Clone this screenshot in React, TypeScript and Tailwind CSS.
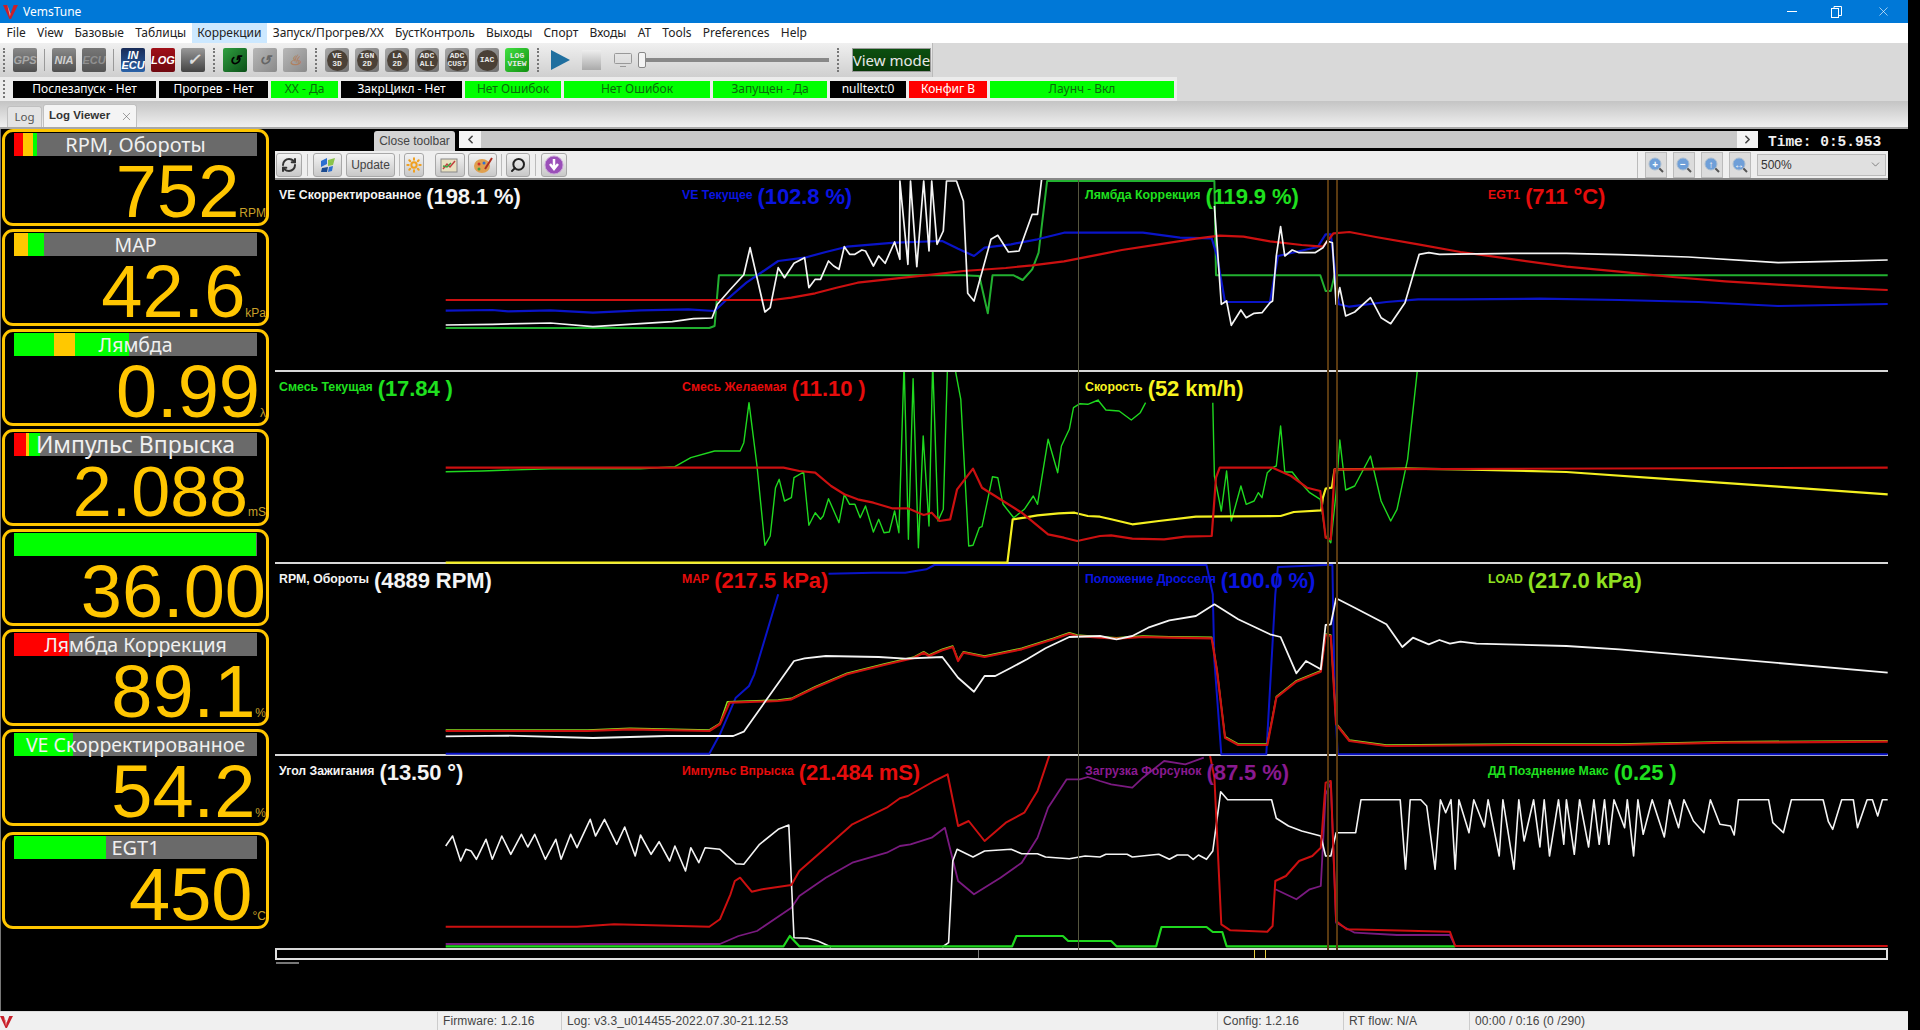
import { ReactNode } from 'react';
import { ChevronDown, ChevronLeft, ChevronRight, RefreshCw, Search, Sun, X } from 'lucide-react';

const menuItems = [
    'File', 'View', 'Базовые', 'Таблицы', 'Коррекции', 'Запуск/Прогрев/ХХ', 'БустКонтроль',
    'Выходы', 'Спорт', 'Входы', 'AT', 'Tools', 'Preferences', 'Help',
];

const indicators = [
    { text: 'Послезапуск - Нет', w: 'w-[143px]', cls: 'bg-black text-white' },
    { text: 'Прогрев - Нет', w: 'w-[109px]', cls: 'bg-black text-white' },
    { text: 'ХХ - Да', w: 'w-[67px]', cls: 'bg-[#00ff00] text-[#0a6a0a]' },
    { text: 'ЗакрЦикл - Нет', w: 'w-[121px]', cls: 'bg-black text-white' },
    { text: 'Нет Ошибок', w: 'w-[96px]', cls: 'bg-[#00ff00] text-[#0a6a0a]' },
    { text: 'Нет Ошибок', w: 'w-[146px]', cls: 'bg-[#00ff00] text-[#0a6a0a]' },
    { text: 'Запущен - Да', w: 'w-[114px]', cls: 'bg-[#00ff00] text-[#0a6a0a]' },
    { text: 'nulltext:0', w: 'w-[76px]', cls: 'bg-black text-white' },
    { text: 'Конфиг В', w: 'w-[78px]', cls: 'bg-[#ff0000] text-white' },
    { text: 'Лаунч - Вкл', w: 'w-[184px]', cls: 'bg-[#00ff00] text-[#0a6a0a]' },
];

const R = 'bg-[#ff0000]';
const O = 'bg-[#ffc800]';
const G = 'bg-[#00ff00]';

const gauges = [
    { title: 'RPM, Обороты', size: 'text-[20px]', num: 'text-[74px]', value: '752', unit: 'RPM', fill: [[R, 'w-[9px]'], [O, 'w-[10px]'], [G, 'w-[4px]']] },
    { title: 'MAP', size: 'text-[19.5px]', num: 'text-[74px]', value: '42.6', unit: 'kPa', fill: [[O, 'w-[14px]'], [G, 'w-[16px]']] },
    { title: 'Лямбда', size: 'text-[19.5px]', num: 'text-[74px]', value: '0.99', unit: 'λ', fill: [[G, 'w-[40px]'], [O, 'w-[21px]'], [G, 'w-[54px]']] },
    { title: 'Импульс Впрыска', size: 'text-[23px]', num: 'text-[70px]', value: '2.088', unit: 'mS', fill: [[R, 'w-[12px]'], [O, 'w-[3px]'], [G, 'w-[11px]']] },
    { title: '', size: 'text-[19.5px]', num: 'text-[74px]', value: '36.00', unit: '', fill: [[G, 'w-[242px]']] },
    { title: 'Лямбда Коррекция', size: 'text-[19.5px]', num: 'text-[74px]', value: '89.1', unit: '%', fill: [[R, 'w-[55px]']] },
    { title: 'VE Скорректированное', size: 'text-[19.5px]', num: 'text-[74px]', value: '54.2', unit: '%', fill: [[G, 'w-[59px]']] },
    { title: 'EGT1', size: 'text-[20px]', num: 'text-[74px]', value: '450', unit: '°C', fill: [[G, 'w-[92px]']] },
];

const WHITE = '#f4f4f4';
const BLUE = '#0a14c8';
const GREEN = '#1fd81f';
const DARKGREEN = '#22b030';
const RED = '#cc1010';
const YELLOW = '#f4f020';
const PURPLE = '#7a1a80';
const LIME = '#8fe020';

// points are read off two crops of the chart, 830px wide and 400px high
const crop = (x0: number, y0: number, pts: string) =>
    pts
        .trim()
        .split(/\s+/)
        .map((p) => {
            const [x, y] = p.split(',').map(Number);
            return `${(x0 + (x * 830) / 1568).toFixed(1)},${(y0 + y / 3).toFixed(1)}`;
        })
        .join(' ');

type Line = { c: string; w: number; y0: number; l?: string; r?: string };

const panels: { top: number; h: number; labels: string[][]; colors: string[]; lines: Line[] }[] = [
    {
        top: 179,
        h: 192,
        labels: [
            ['VE Скорректированное', '(198.1 %)'],
            ['VE Текущее', '(102.8 %)'],
            ['Лямбда Коррекция', '(119.9 %)'],
            ['EGT1', '(711 °C)'],
        ],
        colors: ['text-[#f4f4f4]', 'text-[#0a14e0]', 'text-[#1fe01f]', 'text-[#e60c0c]'],
        lines: [
            { c: DARKGREEN, w: 2, y0: 175, l: '332,456 830,456 840,450 848,298 1310,298 1340,300 1356,412 1365,298 1405,298 1422,312 1440,280 1452,230 1468,15 1568,15', r: '230,15 235,15 238,298 435,298 445,345 455,345 462,298 1507,298' },
            { c: BLUE, w: 2.2, y0: 175, l: '332,404 420,402 450,406 530,403 610,410 700,403 790,400 840,405 860,375 900,320 960,255 1010,245 1050,228 1090,212 1180,200 1270,195 1300,218 1330,240 1350,215 1400,205 1450,190 1500,170 1568,170', r: '100,170 170,185 230,187 240,240 255,378 340,378 355,240 430,213 445,175 455,175 470,385 490,392 560,378 620,370 700,370 850,368 1000,372 1150,378 1300,390 1507,384' },
            { c: RED, w: 2.2, y0: 175, l: '332,372 845,372 950,372 985,365 1030,352 1070,335 1110,320 1180,308 1250,296 1310,285 1390,276 1440,268 1500,256 1568,235', r: '60,222 130,205 200,188 245,179 290,182 340,196 400,207 440,212 460,172 490,168 540,183 620,205 700,228 800,250 900,272 1000,287 1100,303 1200,316 1300,326 1400,335 1507,342' },
            { c: WHITE, w: 1.7, y0: 175, l: '332,447 420,445 530,441 610,452 700,443 760,437 800,428 835,426 845,385 870,340 895,296 907,215 935,408 945,395 960,275 972,305 990,262 1010,245 1018,335 1030,310 1040,310 1055,255 1065,270 1075,280 1085,212 1095,235 1105,235 1118,222 1125,225 1140,270 1150,240 1162,262 1180,198 1190,250 1190,15 1205,265 1210,15 1222,272 1235,15 1245,225 1250,15 1260,205 1272,165 1278,15 1297,15 1310,75 1318,352 1330,375 1362,190 1375,178 1395,228 1415,225 1440,115 1450,115 1460,-20' },
            { c: WHITE, w: 1.7, y0: 175, r: '235,90 248,385 258,375 267,448 285,402 295,425 310,412 325,410 340,380 345,375 352,240 360,152 368,240 382,222 395,230 425,230 440,215 448,195 458,200 465,385 472,335 483,420 500,408 530,365 550,425 568,443 595,380 622,235 640,230 660,235 800,232 900,232 1000,236 1130,243 1300,260 1400,256 1507,252' },
        ],
    },
    {
        top: 371,
        h: 192,
        labels: [
            ['Смесь Текущая', '(17.84 )'],
            ['Смесь Желаемая', '(11.10 )'],
            ['Скорость', '(52 km/h)'],
        ],
        colors: ['text-[#1fe01f]', 'text-[#e60c0c]', 'text-[#f8f420]'],
        lines: [
            { c: GREEN, w: 1.4, y0: 175, l: '332,887 400,885 530,878 700,878 765,872 795,845 840,825 888,825 895,800 905,680 920,870 935,1108 945,1080 955,935 962,910 972,975 985,965 990,905 1008,888 1018,1048 1030,1010 1040,1030 1045,1020 1055,968 1075,1040 1085,955 1095,985 1105,985 1115,1025 1125,990 1140,1068 1150,1030 1160,1070 1170,1068 1180,1005 1188,1070 1198,560 1206,1090 1215,608 1225,1115 1234,780 1245,1050 1252,560 1262,1035 1272,1000 1280,560 1292,560 1305,670 1320,1110 1328,1108 1340,1055 1345,1052 1365,902 1375,905 1385,985 1405,1025 1425,1000 1442,960 1450,985 1470,790 1488,890 1495,810 1510,760 1518,695 1530,683 1545,685 1565,672', r: '15,672 30,702 55,705 78,732 95,710 105,680' },
            { c: GREEN, w: 1.4, y0: 175, r: '232,680 235,900 248,1005 258,885 267,1035 285,930 295,985 310,975 318,950 325,965 335,890 345,875 352,870 360,750 368,888 382,888 395,915 415,950 435,970 445,1080 455,1100 465,950 472,792 483,942 500,930 530,840 550,975 568,1035 580,1000 600,850 620,560' },
            { c: YELLOW, w: 2.2, y0: 175, l: '332,1160 1393,1160 1403,1030 1425,1025 1450,1018 1490,1012 1520,1010 1545,1020 1568,1022', r: '40,1030 80,1045 130,1035 200,1022 360,1020 385,1008 437,1003 440,965 445,938 457,935 462,880 600,878 700,880 900,888 1100,910 1300,932 1507,955' },
            { c: RED, w: 2.2, y0: 175, l: '332,875 970,875 1000,885 1030,890 1060,930 1085,955 1110,970 1140,980 1175,997 1205,997 1235,1017 1250,1010 1265,1035 1285,1030 1298,940 1328,878 1345,935 1385,975 1420,1010 1470,1075 1500,1085 1525,1095 1568,1080', r: '40,1078 80,1088 140,1090 180,1082 230,1080 238,905 245,875 345,875 380,900 410,935 435,945 445,1085 455,1090 462,880 1507,875' },
        ],
    },
    {
        top: 563,
        h: 192,
        labels: [
            ['RPM, Обороты', '(4889 RPM)'],
            ['MAP', '(217.5 kPa)'],
            ['Положение Дросселя', '(100.0 %)'],
            ['LOAD', '(217.0 kPa)'],
        ],
        colors: ['text-[#f4f4f4]', 'text-[#e60c0c]', 'text-[#0a14e0]', 'text-[#8fe020]'],
        lines: [
            { c: BLUE, w: 2, y0: 560, l: '332,578 830,578 850,520 880,410 905,375 915,340 960,100' },
            { c: BLUE, w: 2, y0: 560, l: '1055,38 1140,35 1200,35 1240,25 1255,12 1568,12', r: '220,12 232,100 235,300 248,580 333,580 350,100 355,18 445,12 458,12 462,400 468,580 1507,580' },
            { c: LIME, w: 1.5, y0: 559, l: '332,510 600,510 680,505 830,510 850,490 864,425 960,420 985,415 1030,380 1090,340 1160,312 1215,292 1235,275 1245,285 1270,268 1290,258 1300,300 1310,275 1350,288 1420,265 1480,235 1510,218 1525,225 1568,230', r: '50,233 100,228 150,230 230,232 240,330 255,530 280,552 335,552 345,470 352,410 390,362 436,332 445,222 455,225 465,490 490,540 560,555 800,552 1000,552 1200,545 1507,542' },
            { c: RED, w: 2.2, y0: 560, l: '332,510 600,510 680,505 830,510 850,490 868,425 960,420 985,415 1030,380 1090,340 1160,312 1215,292 1235,275 1245,285 1270,268 1290,258 1300,300 1310,275 1350,288 1420,265 1480,235 1510,218 1525,225 1568,230', r: '50,233 100,228 150,230 230,232 240,330 255,530 280,552 335,552 345,470 352,410 390,362 436,332 445,222 455,225 465,490 490,540 560,555 800,552 1000,552 1200,545 1507,542' },
            { c: WHITE, w: 1.8, y0: 560, l: '332,526 450,524 610,531 750,525 875,525 895,512 990,300 1010,292 1050,285 1150,288 1200,293 1270,288 1300,350 1330,392 1350,345 1370,345 1400,320 1430,295 1465,262 1510,228 1568,225', r: '50,235 80,225 110,200 150,178 200,165 235,130 280,175 340,220 360,228 390,337 408,300 436,325 445,192 455,190 465,112 500,140 560,190 590,258 610,230 640,250 660,237 680,248 700,242 730,248 900,255 1000,265 1200,292 1507,335' },
        ],
    },
    {
        top: 755,
        h: 194,
        labels: [
            ['Угол Зажигания', '(13.50 °)'],
            ['Импульс Впрыска', '(21.484 mS)'],
            ['Загрузка Форсунок', '(87.5 %)'],
            ['ДД Позднение Макс', '(0.25 )'],
        ],
        colors: ['text-[#f4f4f4]', 'text-[#e60c0c]', 'text-[#8a1a90]', 'text-[#1fe01f]'],
        lines: [
            { c: PURPLE, w: 1.8, y0: 560, l: '332,1149 850,1149 885,1125 920,1110 985,1040 1000,1005 1050,950 1100,905 1165,875 1190,855 1210,850 1250,830 1275,800 1300,960 1330,1000 1380,950 1420,905 1450,830 1470,740 1505,655 1530,655 1545,648 1568,660', r: '40,670 80,680 100,650 140,600 180,610 215,590' },
            { c: PURPLE, w: 1.8, y0: 560, r: '350,985 390,1015 415,985 436,975 445,700 455,665 465,1085 500,1115 580,1122 680,1122 690,1155' },
            { c: WHITE, w: 1.6, y0: 560, l: '332,855 345,825 360,900 370,865 380,870 390,895 408,835 420,895 438,825 455,880 475,820 487,858 500,820 520,895 540,835 550,895 568,820 580,860 605,775 615,825 632,775 655,850 670,798 690,885 700,822 720,880 735,842 755,900 765,855 785,930 795,860 810,905 822,860 850,865 880,908 895,910 925,850 960,805 980,792 990,1130 1015,1132 1035,1140 1060,1158' },
            { c: WHITE, w: 1.6, y0: 560, l: '1270,1158 1282,1145 1290,900 1298,865 1328,888 1350,870 1400,865 1420,878 1450,878 1465,888 1510,893 1540,885 1568,888', r: '30,880 70,880 80,888 130,880 150,895 165,882 185,882 195,895 205,882 220,895 232,870 247,692 260,716 343,716 352,772 375,795 400,810 436,825 445,885 455,885 465,815 502,815 512,716 586,716 596,925 605,716 625,716 636,735 652,925 662,716 672,755 682,716 690,925 697,716 716,815 725,716 745,798 752,716 773,885 780,716 801,925 810,716 820,840 838,716 850,858 858,716 868,885 885,716 895,850 900,716 915,880 925,716 942,858 952,716 962,850 972,716 980,850 990,716 1010,800 1015,716 1027,885 1035,716 1045,820 1062,716 1085,828 1095,716 1112,800 1122,716 1140,780 1160,815 1172,716 1190,790 1210,795 1217,822 1225,716 1282,716 1290,785 1310,815 1325,716 1385,716 1395,782 1403,805 1420,716 1442,716 1450,800 1468,716 1478,716 1488,765 1497,716 1507,716' },
            { c: GREEN, w: 2.2, y0: 560, l: '332,1156 970,1156 982,1125 1000,1156 1402,1156 1410,1125 1498,1125 1508,1140 1568,1140', r: '40,1140 50,1156 125,1156 135,1098 220,1098 232,1113 250,1113 258,1156 690,1156' },
            { c: RED, w: 2, y0: 560, l: '332,1097 580,1097 650,1090 830,1097 850,1075 870,1000 878,960 888,950 910,992 930,985 985,972 1000,930 1050,860 1100,790 1165,740 1190,712 1205,705 1255,660 1280,640 1300,795 1320,780 1350,840 1390,785 1425,755 1450,690 1475,570', r: '225,570 235,650 248,1090 265,1108 335,1112 345,1095 350,960 370,945 395,900 420,885 436,860 445,665 455,660 465,1080 485,1105 680,1112 690,1155 1507,1155' },
        ],
    },
];

function Handle() {
    return <div className="mx-[2px] h-[24px] w-[2px] border-l-2 border-dotted border-[#777]" />;
}

function Tile({ children, cls }: { children?: ReactNode; cls: string }) {
    return (
        <div className={`flex h-[24px] w-[24px] shrink-0 items-center justify-center overflow-hidden rounded-[2px] text-center font-['Liberation_Sans',sans-serif] text-[11px] leading-[10px] font-bold italic ${cls}`}>
            {children}
        </div>
    );
}

function Round({ a, b, green }: { a: string; b: string; green?: boolean }) {
    return (
        <div className={`flex h-[24px] w-[24px] shrink-0 items-center justify-center rounded-[3px] bg-gradient-to-br ${green ? 'from-[#40e040] to-[#109010]' : 'from-[#a8a8a8] to-[#707070]'}`}>
            <div className={`flex h-[21px] w-[21px] flex-col items-center justify-center rounded-full font-['Liberation_Mono',monospace] text-[8px] leading-[8px] font-bold text-[#e8e8e8] ${green ? '' : 'bg-[#4a4036]'}`}>
                <span>{a}</span>
                <span>{b}</span>
            </div>
        </div>
    );
}

function LogoV({ size = 14 }: { size?: number }) {
    return (
        <svg width={size} height={size} viewBox="0 0 14 14">
            <path d="M0 1 L4 1 L7 9 L10 1 L14 1 L7.5 14 L6 14 Z" fill="#c8202a" />
            <path d="M4 1 L7 9 L6.5 12 Z" fill="#f0a0a0" />
        </svg>
    );
}

function ZoomBtn({ glyph }: { glyph: string }) {
    return (
        <div className="flex h-[26px] w-[22px] items-center justify-center border border-[#bbb] bg-[#dcdcdc]">
            <svg width="18" height="18" viewBox="0 0 18 18">
                <line x1="10" y1="10" x2="16" y2="16" stroke="#555" strokeWidth="2" />
                <circle cx="8" cy="8" r="6" fill="#6f9fd8" stroke="#a8bcd0" />
                <text x="8" y="11.5" textAnchor="middle" fontSize="10" fontWeight="bold" fill="#fff">{glyph}</text>
            </svg>
        </div>
    );
}

function BarBtn({ children, w }: { children: ReactNode; w: string }) {
    return (
        <div className={`flex h-[24px] ${w} items-center justify-center rounded-[3px] border border-[#a8a8a8] bg-gradient-to-b from-[#f4f4f4] to-[#c8c8c8] font-['Liberation_Sans',sans-serif] text-[12px] text-[#444]`}>
            {children}
        </div>
    );
}

function Gauge({ g }: { g: (typeof gauges)[number] }) {
    return (
        <div className="h-[97px] w-[267px] rounded-[11px] border-[3px] border-[#ffc600] bg-black">
            <div className="relative mt-px ml-[9px] flex h-[23px] w-[243px] bg-[#6a6a6a]">
                {g.fill.map((f, i) => (
                    <div key={i} className={`h-full ${f[0]} ${f[1]}`} />
                ))}
                {g.title && (
                    <div className={`absolute inset-0 flex items-center justify-center font-['Noto_Sans',sans-serif] leading-none whitespace-nowrap text-[#f0f0f0] ${g.size}`}>
                        {g.title}
                    </div>
                )}
            </div>
            <div className="flex h-[67px] items-baseline justify-end font-['Liberation_Sans',sans-serif] text-[#ffc600]">
                <span className={`${g.num} leading-[72px]`}>{g.value}</span>
                {g.unit && <span className="text-[12px] leading-none text-[#c8a028]">{g.unit}</span>}
            </div>
        </div>
    );
}

function Panel({ p }: { p: (typeof panels)[number] }) {
    return (
        <div className="relative w-[1613px] border-b-2 border-[#d8d8d8]" style={{ height: p.h }}>
            <svg className="absolute inset-0" width="1613" height={p.h} viewBox={`275 ${p.top} 1613 ${p.h}`}>
                {p.lines.map((s, i) => {
                    const pts = [s.l && crop(270, s.y0, s.l), s.r && crop(1090, s.y0, s.r)].filter(Boolean).join(' ');
                    return <polyline key={i} points={pts} fill="none" stroke={s.c} strokeWidth={s.w} strokeLinejoin="round" />;
                })}
            </svg>
            <div className="absolute inset-0 grid grid-cols-[403px_403px_403px_403px] grid-rows-[26px] pt-[4px] pl-[4px] font-['Liberation_Sans',sans-serif] font-bold">
                {p.labels.map((l, i) => (
                    <div key={i} className={`flex h-[26px] items-center gap-[5px] whitespace-nowrap ${p.colors[i]}`}>
                        <span className="mb-[4px] text-[12.3px] leading-none">{l[0]}</span>
                        <span className="text-[22px] leading-none tracking-[-0.1px]">{l[1]}</span>
                    </div>
                ))}
            </div>
        </div>
    );
}

export default function App() {
    return (
        <div className="flex h-[1030px] w-[1920px] overflow-hidden bg-black">
            <div className="flex h-full w-[1908px] flex-col font-['Noto_Sans',sans-serif]">
                {/* title bar */}
                <div className="flex h-[23px] shrink-0 items-center bg-[#0078d7] pl-[3px] text-white">
                    <LogoV size={15} />
                    <span className="ml-[5px] text-[12px]">VemsTune</span>
                    <div className="ml-auto flex items-center gap-[34px] pr-[17px]">
                        <div className="h-px w-[10px] bg-white" />
                        <svg width="11" height="12" viewBox="0 0 11 12" fill="none" stroke="white">
                            <rect x="0.5" y="2.5" width="7" height="9" />
                            <path d="M3 2.5 V0.5 H10.5 V9.5 H8" />
                        </svg>
                        <X size={15} strokeWidth={1} />
                    </div>
                </div>

                {/* menu */}
                <div className="flex h-[20px] shrink-0 items-center bg-white pl-px text-[12px] text-[#222]">
                    {menuItems.map((m) => (
                        <div key={m} className={`flex h-full items-center px-[5.6px] whitespace-nowrap ${m === 'Коррекции' ? 'bg-[#cce8ff]' : ''}`}>
                            {m}
                        </div>
                    ))}
                </div>

                {/* toolbar */}
                <div className="flex h-[34px] shrink-0 items-center bg-[#d9d9d9]">
                    <div className="flex h-full w-[933px] items-center gap-[6px] border-r border-[#bbb] bg-gradient-to-b from-[#f0f0f0] to-[#cfcfcf] pl-px">
                        <Handle />
                        <Tile cls="bg-gradient-to-b from-[#8a8a8a] to-[#505050] text-[#a8a8a8]">GPS</Tile>
                        <div className="mx-px h-[22px] w-px bg-[#999]" />
                        <Tile cls="bg-gradient-to-b from-[#8a8a8a] to-[#505050] text-[#d0d0d0]">NIA</Tile>
                        <Tile cls="bg-gradient-to-b from-[#777] to-[#555] text-[#909090]">ECU</Tile>
                        <div className="mx-px h-[22px] w-px bg-[#999]" />
                        <Tile cls="bg-gradient-to-b from-[#182c58] to-[#2a62a8] text-white">IN ECU</Tile>
                        <Tile cls="bg-gradient-to-b from-[#a01018] to-[#700810] text-white">LOG</Tile>
                        <Tile cls="bg-gradient-to-b from-[#999] to-[#444] text-[#ddd] text-[16px]">✓</Tile>
                        <Handle />
                        <Tile cls="bg-gradient-to-br from-[#30a040] to-[#0a5018] text-black text-[14px]">↺</Tile>
                        <Tile cls="bg-gradient-to-br from-[#b8b8b8] to-[#8a8a8a] text-[#666] text-[14px]">↺</Tile>
                        <Tile cls="bg-gradient-to-br from-[#b8b8b8] to-[#8a8a8a] text-[#b08060] text-[14px]">♨</Tile>
                        <Handle />
                        <Round a="VE" b="3D" />
                        <Round a="IGN" b="2D" />
                        <Round a="LA" b="2D" />
                        <Round a="ADC" b="ALL" />
                        <Round a="ADC" b="CUST" />
                        <Round a="IAC" b="" />
                        <Round a="LOG" b="VIEW" green />
                        <Handle />
                        <svg width="21" height="24" viewBox="0 0 21 24" className="ml-[3px]">
                            <path d="M1 2 L20 12 L1 22 Z" fill="#1f6f9f" />
                        </svg>
                        <div className="ml-[5px] h-[20px] w-[19px] bg-gradient-to-b from-[#eee] to-[#aaa]" />
                        <svg width="20" height="16" viewBox="0 0 20 16" fill="none" stroke="#999" className="ml-[6px]">
                            <rect x="1.5" y="1.5" width="17" height="10" rx="1" />
                            <path d="M7 14.5 H13" />
                        </svg>
                        <div className="relative ml-[-1px] h-[4px] w-[191px] bg-[#888]">
                            <div className="absolute top-[-6px] left-0 h-[16px] w-[8px] rounded-[2px] border border-[#888] bg-[#f4f4f4]" />
                        </div>
                        <Handle />
                        <div className="ml-[5px] flex h-[24px] w-[79px] items-center justify-center border border-[#999] bg-gradient-to-b from-[#0c5010] to-[#083808] text-[15px] leading-none whitespace-nowrap text-[#e8e8e8]">
                            View mode
                        </div>
                    </div>
                </div>

                {/* indicators */}
                <div className="flex h-[24px] shrink-0 bg-[#d9d9d9]">
                    <div className="flex h-full items-center gap-[3px] bg-[#ececec] pr-[3px] pl-[2px]">
                        <div className="mr-[5px] ml-[1px] h-[18px] w-[2px] border-l-2 border-dotted border-[#777]" />
                        {indicators.map((ind, i) => (
                            <div key={i} className={`flex h-[17px] ${ind.w} items-center justify-center text-[12px] leading-none whitespace-nowrap ${ind.cls}`}>
                                {ind.text}
                            </div>
                        ))}
                    </div>
                </div>

                {/* tabs */}
                <div className="flex h-[28px] shrink-0 items-end border-b-2 border-[#a8a8a8] bg-gradient-to-b from-[#c4c4c4] to-[#f0f0f0] pl-[7px] text-[11.5px]">
                    <div className="flex h-[21px] w-[35px] items-center justify-center rounded-t-[3px] border border-b-0 border-[#c0c0c0] bg-[#e4e4e4] text-[#555]">Log</div>
                    <div className="ml-px flex h-[23px] w-[94px] items-center justify-between rounded-t-[3px] border border-b-0 border-[#c0c0c0] bg-[#f4f4f4] pr-[3px] pl-[5px] font-['Liberation_Sans',sans-serif] font-bold text-[#333]">
                        Log Viewer
                        <X size={13} strokeWidth={1} className="text-[#555]" />
                    </div>
                </div>

                <div className="flex min-h-0 flex-1 bg-black">
                    {/* gauges */}
                    <div className="flex w-[275px] shrink-0 flex-col gap-[3px] border-l border-[#777] pl-px">
                        {gauges.map((g, i) => (
                            <div key={i} className={i === 7 ? 'mt-[3px]' : ''}>
                                <Gauge g={g} />
                            </div>
                        ))}
                    </div>

                    {/* log viewer */}
                    <div className="w-[1613px] shrink-0">
                        <div className="flex h-[22px] items-end pl-[99px]">
                            <div className="flex h-[20px] w-[81px] items-center justify-center rounded-t-[3px] bg-[#d4d4d4] font-['Liberation_Sans',sans-serif] text-[12px] text-[#444]">
                                Close toolbar
                            </div>
                            <div className="mb-[3px] ml-[4px] flex h-[17px] w-[1299px] bg-[#c8c8c8]">
                                <div className="flex w-[22px] items-center justify-center bg-[#f4f4f4]">
                                    <ChevronLeft size={13} strokeWidth={3} className="text-[#444]" />
                                </div>
                                <div className="flex-1" />
                                <div className="flex w-[21px] items-center justify-center bg-[#f4f4f4]">
                                    <ChevronRight size={13} strokeWidth={3} className="text-[#444]" />
                                </div>
                            </div>
                            <div className="mb-[-3px] ml-[10px] font-['Liberation_Mono',monospace] text-[14.5px] font-bold whitespace-nowrap text-[#f0f0f0]">
                                Time: 0:5.953
                            </div>
                        </div>

                        <div className="flex h-[29px] items-center border-b-2 border-[#888] bg-[#efefef] pl-px">
                            <BarBtn w="w-[26px]"><RefreshCw size={16} strokeWidth={3} className="text-[#333]" /></BarBtn>
                            <div className="mx-[5px] h-[22px] w-px bg-[#bbb]" />
                            <BarBtn w="w-[29px]">
                                <svg width="18" height="16" viewBox="0 0 18 16">
                                    <path d="M2 4 L8 1 L8 7 L2 10 Z" fill="#2c6fd0" />
                                    <path d="M9 3 L16 1 L14 8 L9 9 Z" fill="#8bc34a" />
                                    <path d="M3 11 L9 10 L8 15 L2 15 Z" fill="#1a4a90" />
                                    <path d="M10 10 L14 9 L13 14 L9 15 Z" fill="#2c6fd0" />
                                </svg>
                            </BarBtn>
                            <div className="w-[4px]" />
                            <BarBtn w="w-[49px]">Update</BarBtn>
                            <div className="mx-[4px] h-[22px] w-px bg-[#bbb]" />
                            <BarBtn w="w-[20px]"><Sun size={16} strokeWidth={3} className="text-[#f0a020]" /></BarBtn>
                            <div className="w-[11px]" />
                            <BarBtn w="w-[30px]">
                                <svg width="20" height="16" viewBox="0 0 20 16">
                                    <rect x="1" y="2" width="16" height="13" fill="#e8e0c0" stroke="#888" />
                                    <path d="M3 12 L7 7 L10 10 L15 4" fill="none" stroke="#c04040" strokeWidth="1.5" />
                                    <path d="M3 9 L7 10 L11 6" fill="none" stroke="#40a040" strokeWidth="1.5" />
                                </svg>
                            </BarBtn>
                            <div className="w-[3px]" />
                            <BarBtn w="w-[29px]">
                                <svg width="20" height="18" viewBox="0 0 20 18">
                                    <ellipse cx="9" cy="10" rx="8" ry="7" fill="#e0a050" />
                                    <circle cx="6" cy="8" r="1.5" fill="#d03030" />
                                    <circle cx="11" cy="7" r="1.5" fill="#3070d0" />
                                    <circle cx="6" cy="13" r="1.5" fill="#40a040" />
                                    <path d="M12 13 L19 2" stroke="#b03020" strokeWidth="2" />
                                </svg>
                            </BarBtn>
                            <div className="mx-[4px] h-[22px] w-px bg-[#bbb]" />
                            <BarBtn w="w-[24px]"><Search size={16} strokeWidth={3} className="-scale-x-100 text-[#222]" /></BarBtn>
                            <div className="mx-[5px] h-[22px] w-px bg-[#bbb]" />
                            <BarBtn w="w-[26px]">
                                <svg width="20" height="20" viewBox="0 0 20 20">
                                    <circle cx="10" cy="10" r="9" fill="#9a4fb8" stroke="#c8a0d8" />
                                    <path d="M10 4 V12 M6 9 L10 14 L14 9" fill="none" stroke="#fff" strokeWidth="2.5" />
                                </svg>
                            </BarBtn>
                            <div className="ml-auto flex items-center gap-[6px] pr-[2px]">
                                <div className="mr-px h-[26px] w-px bg-[#bbb]" />
                                <ZoomBtn glyph="+" />
                                <ZoomBtn glyph="−" />
                                <ZoomBtn glyph="↑" />
                                <ZoomBtn glyph="↔" />
                                <div className="flex h-[22px] w-[129px] items-center justify-between border border-[#bbb] bg-[#e0e0e0] px-[3px] font-['Liberation_Sans',sans-serif] text-[12px] text-[#333]">
                                    500%
                                    <ChevronDown size={13} strokeWidth={1} />
                                </div>
                            </div>
                        </div>

                        <div className="relative">
                            {panels.map((p) => (
                                <Panel key={p.top} p={p} />
                            ))}
                            {/* cursors run over all four charts */}
                            <div className="absolute top-0 bottom-0 left-[803px] w-px bg-[#55553f]" />
                            <div className="absolute top-0 bottom-0 left-[1052px] w-[2px] bg-[#5a3a10]" />
                            <div className="absolute top-0 bottom-0 left-[1061px] w-[2px] bg-[#5a3a10]" />
                        </div>

                        <div className="relative h-[10px] border-2 border-t-0 border-[#e0e0e0]">
                            <div className="absolute top-0 left-[701px] h-full w-px bg-[#777]" />
                            <div className="absolute top-0 left-[977px] h-full w-px bg-[#e8d040]" />
                            <div className="absolute top-0 left-[988px] h-full w-px bg-[#e8d040]" />
                        </div>
                        <div className="mt-[2px] ml-px h-[2px] w-[23px] bg-[#777]" />
                    </div>
                </div>

                {/* status bar */}
                <div className="flex h-[19px] shrink-0 items-center border-t border-[#ddd] bg-[#f0f0f0] font-['Liberation_Sans',sans-serif] text-[12px] tracking-[0.1px] text-[#444]">
                    <div className="flex w-[437px] items-center"><LogoV size={13} /></div>
                    <div className="h-full w-[124px] border-l border-[#ccc] pl-[5px] leading-[18px]">Firmware: 1.2.16</div>
                    <div className="h-full w-[656px] border-l border-[#ccc] pl-[5px] leading-[18px]">Log: v3.3_u014455-2022.07.30-21.12.53</div>
                    <div className="h-full w-[126px] border-l border-[#ccc] pl-[5px] leading-[18px]">Config: 1.2.16</div>
                    <div className="h-full w-[126px] border-l border-[#ccc] pl-[5px] leading-[18px]">RT flow: N/A</div>
                    <div className="h-full flex-1 border-l border-[#ccc] pl-[5px] leading-[18px]">00:00 / 0:16 (0 /290)</div>
                </div>
            </div>
        </div>
    );
}
